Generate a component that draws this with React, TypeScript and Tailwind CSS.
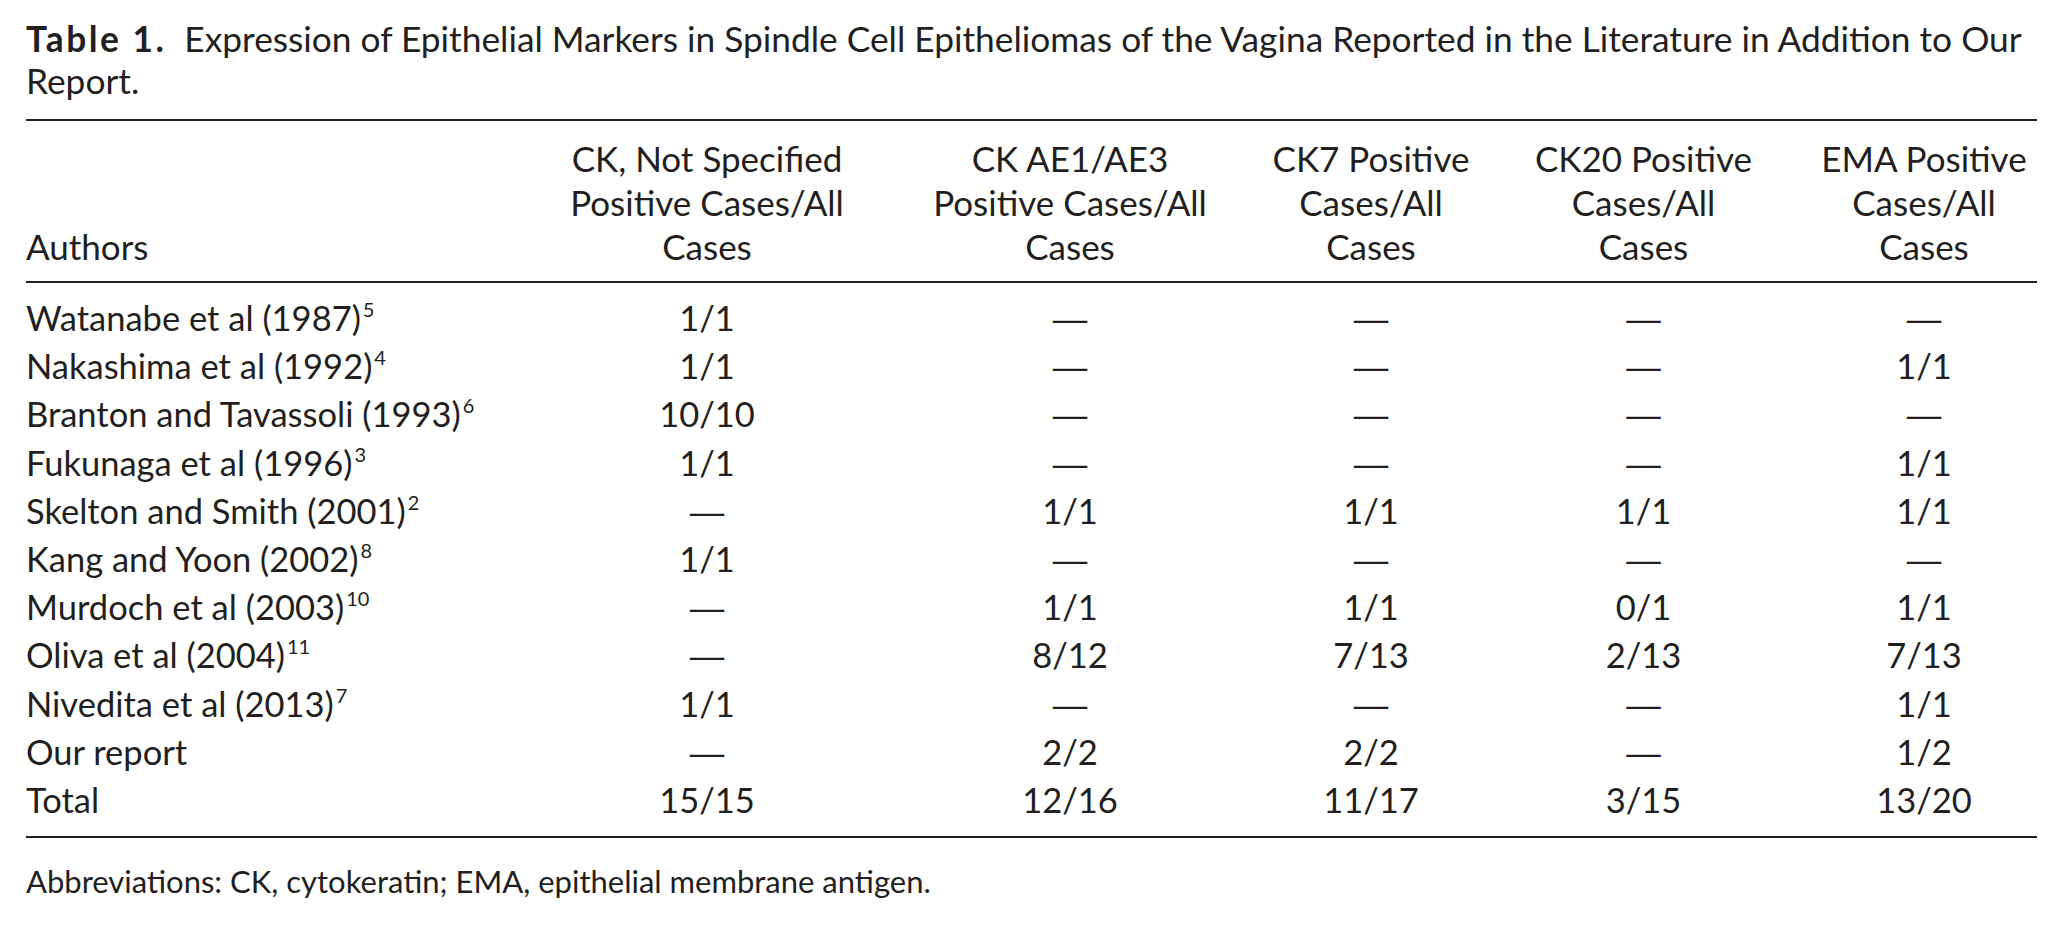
const rows: [string, string, string[]][] = [
  ['Watanabe et al (1987)', '5', ['1/1', '—', '—', '—', '—']],
  ['Nakashima et al (1992)', '4', ['1/1', '—', '—', '—', '1/1']],
  ['Branton and Tavassoli (1993)', '6', ['10/10', '—', '—', '—', '—']],
  ['Fukunaga et al (1996)', '3', ['1/1', '—', '—', '—', '1/1']],
  ['Skelton and Smith (2001)', '2', ['—', '1/1', '1/1', '1/1', '1/1']],
  ['Kang and Yoon (2002)', '8', ['1/1', '—', '—', '—', '—']],
  ['Murdoch et al (2003)', '10', ['—', '1/1', '1/1', '0/1', '1/1']],
  ['Oliva et al (2004)', '11', ['—', '8/12', '7/13', '2/13', '7/13']],
  ['Nivedita et al (2013)', '7', ['1/1', '—', '—', '—', '1/1']],
  ['Our report', '', ['—', '2/2', '2/2', '—', '1/2']],
  ['Total', '', ['15/15', '12/16', '11/17', '3/15', '13/20']],
];

const headers = [
  ['CK, Not Specified', 'Positive Cases/All', 'Cases'],
  ['CK AE1/AE3', 'Positive Cases/All', 'Cases'],
  ['CK7 Positive', 'Cases/All', 'Cases'],
  ['CK20 Positive', 'Cases/All', 'Cases'],
  ['EMA Positive', 'Cases/All', 'Cases'],
];

const grid = 'grid grid-cols-[514px_334px_392px_210px_335px_226px]';

function Cell({ value }: { value: string }) {
  // the source prints a full-width em dash for "not tested"
  if (value === '—') {
    return <span className="font-['Liberation_Sans',sans-serif]">—</span>;
  }
  return <span>{value}</span>;
}

export default function App() {
  return (
    <div className="min-h-screen bg-white text-[#231f20] font-['Lato',sans-serif]">
      <div className="w-[2011px] ml-[26px] pt-[18px]">
        {/* Caption */}
        <div className="text-[35.3px] leading-[42px]">
          <div className="whitespace-nowrap">
            <span className="font-bold tracking-[2.5px] mr-[18px]">Table 1.</span>
            <span>
              Expression of Epithelial Markers in Spindle Cell Epitheliomas of the Vagina Reported in the Literature in Addition to Our
            </span>
          </div>
          <div>Report.</div>
        </div>

        {/* Table */}
        <div className="mt-[17px] border-t-[2px] border-b-[2px] border-[#231f20]">
          <div className={`${grid} pt-[15px] pb-[13px] border-b-[2px] border-[#231f20] text-[35px] leading-[44px]`}>
            <div className="self-end">Authors</div>
            {headers.map((h, i) => (
              <div key={i} className="text-center whitespace-nowrap">
                {h.map((line, j) => (
                  <div key={j}>{line}</div>
                ))}
              </div>
            ))}
          </div>
          <div className="pt-[11px] pb-[12px] text-[34.5px] leading-[48.2px]">
            {rows.map(([name, ref, vals]) => (
              <div key={name} className={`${grid} h-[48.2px]`}>
                <div className="whitespace-nowrap">
                  {name}
                  {ref && <sup className="text-[20px] leading-none top-[-14px] ml-[2px]">{ref}</sup>}
                </div>
                {vals.map((v, i) => (
                  <div key={i} className="text-center">
                    <Cell value={v} />
                  </div>
                ))}
              </div>
            ))}
          </div>
        </div>

        {/* Footnote */}
        <p className="mt-[22px] text-[31px] leading-[42px]">
          Abbreviations: CK, cytokeratin; EMA, epithelial membrane antigen.
        </p>
      </div>
    </div>
  );
}
